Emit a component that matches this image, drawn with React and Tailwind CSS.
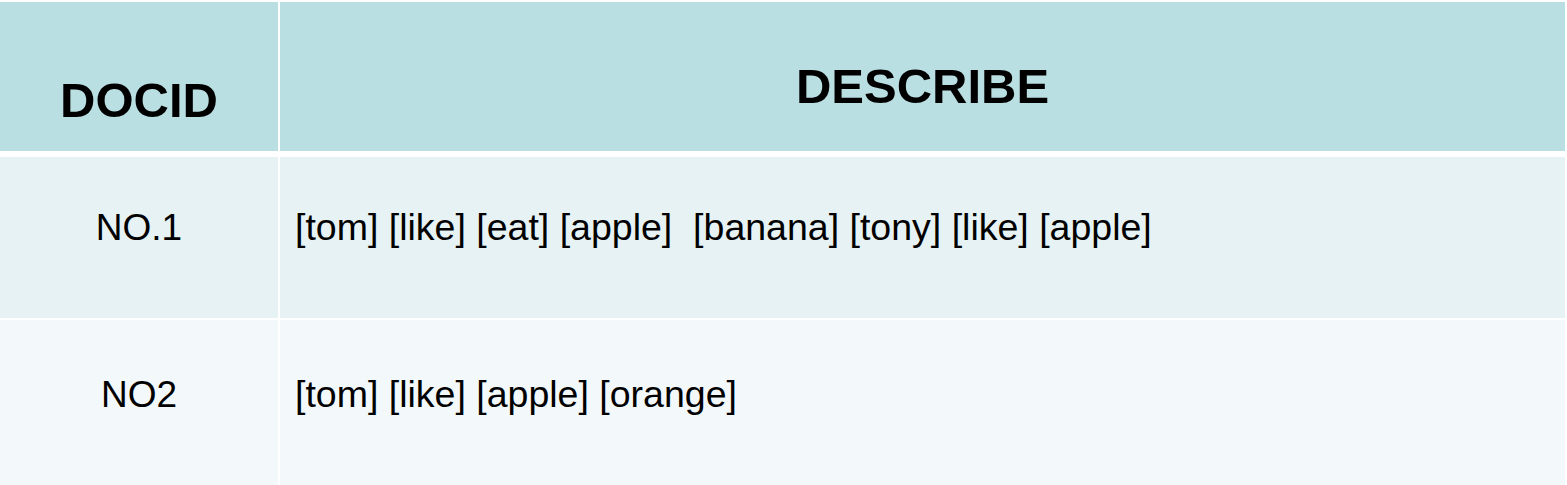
import React from "react";

const rows = [
  { id: "NO.1", text: "[tom] [like] [eat] [apple]  [banana] [tony] [like] [apple]", bg: "bg-[#e6f2f3]", h: "h-[161px]", pt: "pt-[52px]" },
  { id: "NO2", text: "[tom] [like] [apple] [orange]", bg: "bg-[#f3f8fa]", h: "h-[165px]", pt: "pt-[56px]" },
];

export default function App() {
  return (
    <div
      className="w-[1567px] h-[485px] bg-white pt-[2px] pr-[2px] flex flex-col overflow-hidden text-black"
      style={{ fontFamily: '"Liberation Sans", Arial, sans-serif' }}
    >
      <div className="flex gap-[2px] h-[149px]">
        <div className="w-[278px] bg-[#badfe3] flex justify-center pt-[74px]">
          <span className="text-[49px] leading-none font-bold">DOCID</span>
        </div>
        <div className="flex-1 bg-[#badfe3] flex justify-center pt-[60px]">
          <span className="text-[49px] leading-none font-bold">DESCRIBE</span>
        </div>
      </div>

      <div className="h-[6px]" />

      {rows.map((r, i) => (
        <div key={r.id} className={`flex gap-[2px] ${r.h} ${i > 0 ? "mt-[2px]" : ""}`}>
          <div className={`w-[278px] ${r.bg} flex justify-center ${r.pt}`}>
            <span className="text-[37px] leading-none">{r.id}</span>
          </div>
          <div className={`flex-1 ${r.bg} pl-[15px] ${r.pt}`}>
            <span className="text-[37.5px] leading-none whitespace-pre">{r.text}</span>
          </div>
        </div>
      ))}
    </div>
  );
}
